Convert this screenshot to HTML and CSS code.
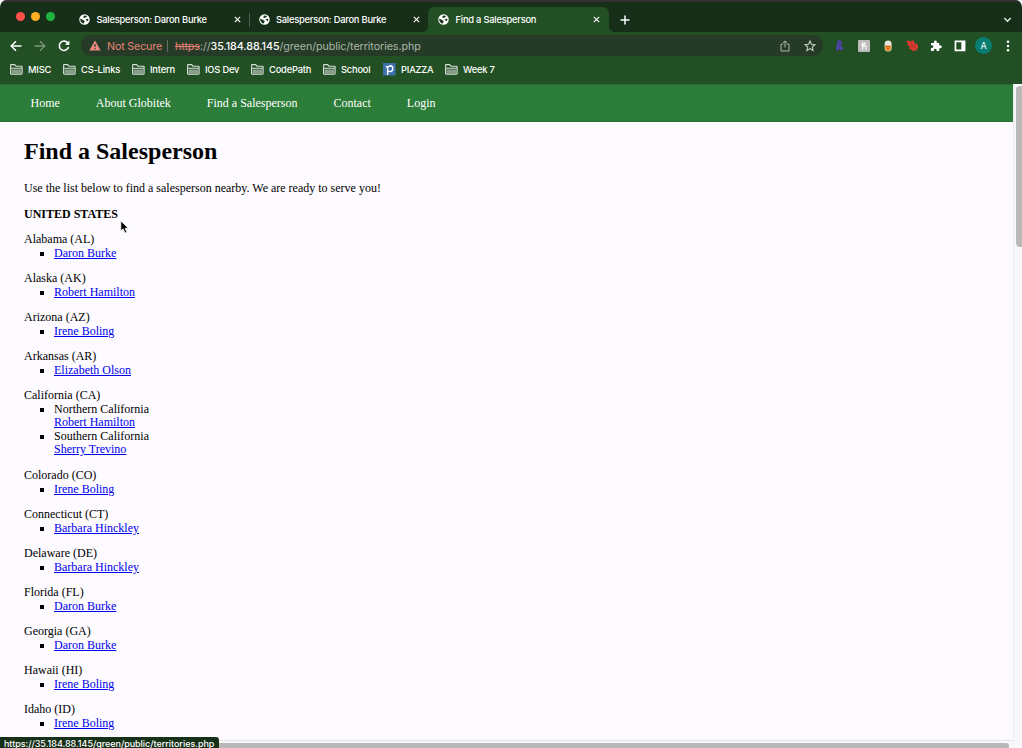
FILE: index.html
```html
<!DOCTYPE html>
<html lang="en">
<head>
<meta charset="utf-8">
<title>Find a Salesperson</title>
<link rel="stylesheet" href="styles.css">
</head>
<body>
<svg class="defs" width="0" height="0">
  <symbol id="globe" viewBox="0 0 12 12"><circle cx="6" cy="6" r="5.7" fill="#fff"/><path d="M1.4 4.8 3.5 5.9 4.8 6.6 6.3 8 5.2 10.3 3.5 10 1.5 7.5ZM5.8 1.6 9 2.2 8 3.2 6.9 4.2 5.2 4.4 4.6 3.2ZM7.1 5.6 9.1 5.3 10.4 6 9.6 7.9 8.3 7.2Z" fill="#1c3a1d"/></symbol>
  <symbol id="close" viewBox="0 0 7 7"><path d="M.8.8 6.2 6.2M6.2.8.8 6.2" stroke="#fff" stroke-width="1.1"/></symbol>
  <symbol id="folder" viewBox="0 0 13 11"><path d="M.6 9.5V1.2Q.6.6 1.2.6H4.6L6 2.2H11.5Q12.1 2.2 12.1 2.8V9.5Q12.1 10.1 11.5 10.1H1.2Q.6 10.1.6 9.5ZM.6 4.3H12.1" fill="none" stroke="#d7dfd7" stroke-width="1.1"/><path d="M1.5 5.5H11.4V9.4H1.5Z" fill="#8a9f8b"/></symbol>
</svg>
<div class="window">
  <div class="tabstrip">
    <div class="lights"><i class="red"></i><i class="yellow"></i><i class="green"></i></div>
    <div class="tab first"><svg class="globe"><use href="#globe"/></svg><span>Salesperson: Daron Burke</span><svg class="close"><use href="#close"/></svg></div>
    <div class="tab"><svg class="globe"><use href="#globe"/></svg><span>Salesperson: Daron Burke</span><svg class="close"><use href="#close"/></svg></div>
    <div class="tab active"><svg class="globe"><use href="#globe"/></svg><span>Find a Salesperson</span><svg class="close"><use href="#close"/></svg></div>
    <svg class="plus" viewBox="0 0 10 10"><path d="M5 .5V9.5M.5 5H9.5" stroke="#fff" stroke-width="1.5"/></svg>
    <svg class="chevron" viewBox="0 0 8 6"><path d="M.8 1 4 4.3 7.2 1" fill="none" stroke="#e6efe6" stroke-width="1.4"/></svg>
  </div>
  <div class="toolbar">
    <div class="history">
      <svg viewBox="0 0 12 12"><path d="M11.5 6H1.5M6 1.2 1.2 6 6 10.8" fill="none" stroke="#fff" stroke-width="1.5"/></svg>
      <svg viewBox="0 0 12 12"><path d="M.5 6H10.5M6 1.2 10.8 6 6 10.8" fill="none" stroke="#7b967c" stroke-width="1.3"/></svg>
      <svg viewBox="0 0 12 12"><path d="M10 3.2A4.7 4.7 0 1 0 10.6 7" fill="none" stroke="#fff" stroke-width="1.6"/><path d="M11.4.6V5H7Z" fill="#fff"/></svg>
    </div>
    <div class="address">
      <svg class="warn" viewBox="0 0 12 11"><path d="M6 .4 11.7 10.6H.3Z" fill="#ec8a80"/><path d="M6 4V7M6 8V9.2" stroke="#263b27" stroke-width="1.2"/></svg>
      <span class="notsecure">Not Secure</span><span class="bar"></span>
      <span class="url"><s>https</s>://<b>35.184.88.145</b>/green/public/territories.php</span>
      <svg class="share" viewBox="0 0 10 12"><path d="M3.2 4.2H1V11H9V4.2H6.8M5 7.5V1M2.9 3 5 .9 7.1 3" fill="none" stroke="#a9b9a9"/></svg>
      <svg class="star" viewBox="0 0 12 12"><path d="M6 1 7.4 4.3 11 4.6 8.3 7 9.1 10.5 6 8.6 2.9 10.5 3.7 7 1 4.6 4.6 4.3Z" fill="none" stroke="#c3cfc3" stroke-width="1.1"/></svg>
    </div>
    <div class="extensions">
      <svg viewBox="0 0 12 12"><path d="M3.4.5H6.6L7.6 2V5.2L6.4 6 8.8 8V10H6.8L5.5 8.6 4 10.2H1.8L3 7.6 2.2 5.4 3.4 4Z" fill="#5146b5"/><path d="M1.4 11.3H3.4M7.4 10.4H9.4M4.6 3H6.4M4.4 6H6.2" stroke="#37335f"/></svg>
      <svg viewBox="0 0 12 12"><rect width="12" height="12" rx="1" fill="#bcbcbc"/><path d="M4.6 2V9.8M4.6 6.4Q8 4.6 8 7V9.8M3.2 4.6Q7 4.8 7.4 2.3" fill="none" stroke="#fff" stroke-width="1.1"/></svg>
      <svg viewBox="0 0 12 12"><rect x="2.6" y=".5" width="7" height="11" rx="3.5" fill="#e8e5df"/><path d="M3 5.6H9.2V8.2Q8.8 11 6.1 11 3.4 11 3 8.2Z" fill="#e8952f"/><path d="M4 5.8 5.5 7.2 6.3 6.3 7.8 7.5M5 9H7.2" stroke="#bd4b22" fill="none"/></svg>
      <svg viewBox="0 0 12 12"><path d="M0 1 3.2.6 5 2.3 5.6.6 8 .6 8.2 3 10.4 3.4 12 5.4V8L10 10.5 7 11 5.1 9.5 3 8.6 3.6 6.2 1.4 5.4 2 3.5Z" fill="#d83a31"/><path d="M5 4 6.6 5 5.7 7M9 5 8 7.8" fill="none" stroke="#87302a" stroke-width=".8"/></svg>
      <svg viewBox="0 0 12 12"><path d="M1 3H4Q3.5.4 5.4.4 7.3.4 6.8 3H9.2V5.3Q11.8 4.8 11.8 6.8 11.8 8.7 9.2 8.2V11H6.7Q7 8.7 5.2 8.7 3.6 8.7 3.7 11H1V8Q3.4 8.2 3.4 6.5 3.4 4.9 1 5.3Z" fill="#fff"/></svg>
      <svg viewBox="0 0 12 12"><path d="M.6.5H11.4V11.3H.6Z" fill="#fff"/><path d="M2.3 2.3H7.3V9.6H2.3Z" fill="#225024"/></svg>
    </div>
    <div class="avatar">A</div>
    <svg class="dots" viewBox="0 0 4 12"><circle cx="2" cy="1.7" r="1.25" fill="#fff"/><circle cx="2" cy="6" r="1.25" fill="#fff"/><circle cx="2" cy="10.3" r="1.25" fill="#fff"/></svg>
  </div>
  <div class="bookmarks">
    <div style="width:53px"><svg><use href="#folder"/></svg>MISC</div>
    <div style="width:69px"><svg><use href="#folder"/></svg>CS-Links</div>
    <div style="width:55px"><svg><use href="#folder"/></svg>Intern</div>
    <div style="width:64px"><svg><use href="#folder"/></svg>IOS Dev</div>
    <div style="width:72px"><svg><use href="#folder"/></svg>CodePath</div>
    <div style="width:60px"><svg><use href="#folder"/></svg>School</div>
    <div style="width:62px"><svg viewBox="0 0 13 13" class="piazza"><rect width="12.5" height="12.5" fill="#3e70ad"/><path d="M2.6 3.6H4.6V12M4.6 5Q5.2 2.8 7.4 2.8 9.8 2.9 9.8 5.6 9.7 8.5 7.2 8.6 5.4 8.6 4.7 7.4" fill="none" stroke="#fff" stroke-width="1.4"/></svg>PIAZZA</div>
    <div><svg><use href="#folder"/></svg>Week 7</div>
  </div>
  <div class="viewport">
    <div class="page">
      <nav><a>Home</a><a>About Globitek</a><a>Find a Salesperson</a><a>Contact</a><a>Login</a></nav>
      <main>
        <h1>Find a Salesperson</h1>
        <p>Use the list below to find a salesperson nearby. We are ready to serve you!</p>
        <p><strong>UNITED STATES</strong></p>
        <section>Alabama (AL)<ul><li><a>Daron Burke</a></li></ul></section>
        <section>Alaska (AK)<ul><li><a>Robert Hamilton</a></li></ul></section>
        <section>Arizona (AZ)<ul><li><a>Irene Boling</a></li></ul></section>
        <section>Arkansas (AR)<ul><li><a>Elizabeth Olson</a></li></ul></section>
        <section>California (CA)<ul><li>Northern California<br><a>Robert Hamilton</a></li><li>Southern California<br><a>Sherry Trevino</a></li></ul></section>
        <section>Colorado (CO)<ul><li><a>Irene Boling</a></li></ul></section>
        <section>Connecticut (CT)<ul><li><a>Barbara Hinckley</a></li></ul></section>
        <section>Delaware (DE)<ul><li><a>Barbara Hinckley</a></li></ul></section>
        <section>Florida (FL)<ul><li><a>Daron Burke</a></li></ul></section>
        <section>Georgia (GA)<ul><li><a>Daron Burke</a></li></ul></section>
        <section>Hawaii (HI)<ul><li><a>Irene Boling</a></li></ul></section>
        <section>Idaho (ID)<ul><li><a>Irene Boling</a></li></ul></section>
      </main>
    </div>
    <div class="vscroll"><i></i></div>
    <div class="hscroll"><i></i></div>
  </div>
  <div class="status">https://35.184.88.145/green/public/territories.php</div>
  <svg class="cursor" viewBox="0 0 9 14"><path d="M.8.8V11L3.2 8.9 5 13 6.9 12.2 5.1 8.3H8.3Z" fill="#000" stroke="#fff" stroke-width=".8"/></svg>
</div>
</body>
</html>
```
FILE: styles.css
```css
* { box-sizing: border-box; }
body { margin: 0; background: #fdfbff; overflow: hidden; }
svg { display: block; flex: none; }
.defs { position: absolute; }
.window { position: relative; height: 748px; display: flex; flex-direction: column; background: #172e18; border-radius: 7px 7px 0 0; font-family: Inter, "Open Sans", sans-serif; color: #fff; overflow: hidden; }
.tabstrip { height: 32px; display: flex; border-top: 2px solid #343034; flex: none; }
.lights { width: 69px; padding: 10px 0 0 16px; display: flex; gap: 6px; flex: none; }
.lights i { width: 9px; height: 9px; border-radius: 50%; }
.red { background: #ff5149; }
.yellow { background: #fdb023; }
.green { background: #1fb440; }
.tab { position: relative; width: 179.5px; height: 25px; margin-top: 5px; padding: 0 8px 0 10px; display: flex; align-items: center; font-size: 9.3px; font-weight: 500; letter-spacing: -.21px; white-space: nowrap; }
.tab span { margin-left: 6.5px; flex: 1; }
.tab.first::after { content: ""; position: absolute; right: -1px; top: 6px; width: 1px; height: 14px; background: #4b5f4c; }
.tab.active { width: 181px; padding-right: 9px; background: #225024; border-radius: 6px 6px 0 0; }
.tab.active::before, .tab.active::after { content: ""; position: absolute; bottom: 0; width: 5px; height: 5px; }
.tab.active::before { left: -5px; background: radial-gradient(circle at 0 0, transparent 4.5px, #225024 5px); }
.tab.active::after { right: -5px; background: radial-gradient(circle at 100% 0, transparent 4.5px, #225024 5px); }
.globe { width: 11px; height: 11px; }
.close { width: 7px; height: 7px; }
.plus { width: 10px; height: 10px; margin: 13px 0 0 11px; }
.chevron { width: 9px; height: 6px; margin: 15px 10px 0 auto; }
.toolbar { height: 27px; flex: none; display: flex; align-items: center; background: #225024; padding-right: 12px; }
.history { width: 81px; display: flex; gap: 12px; padding-left: 10px; flex: none; }
.history svg { width: 12px; height: 12px; }
.address { width: 742px; height: 21px; border-radius: 11px; background: #263b27; display: flex; align-items: center; padding: 0 7px 0 8px; font-size: 11px; white-space: nowrap; flex: none; }
.warn { width: 12px; height: 11px; }
.notsecure { margin-left: 6px; width: 60px; padding-top: 1.5px; color: #e98178; font-size: 10.7px; letter-spacing: -.15px; }
.bar { width: 1px; height: 12px; background: #647265; margin-right: 7px; }
.url { flex: 1; padding-top: 1.5px; color: #a9b6a9; font-size: 10.7px; letter-spacing: -.06px; }
.url s { color: #e98178; }
.url b { color: #fff; font-weight: 500; }
.share { width: 10px; height: 12px; margin-right: 14px; }
.star { width: 12px; height: 12px; }
.extensions { display: flex; gap: 12px; margin-left: 11px; }
.extensions svg { width: 12px; height: 12px; }
.avatar { width: 17px; height: 17px; border-radius: 50%; background: #087d70; margin-left: 9px; text-align: center; font-size: 9px; line-height: 17px; }
.dots { width: 4px; height: 12px; margin-left: auto; }
.bookmarks { height: 24.5px; flex: none; display: flex; background: #225024; padding: 0 0 3px 10px; font-size: 9.3px; font-weight: 500; letter-spacing: -.18px; white-space: nowrap; }
.bookmarks div { display: flex; align-items: center; flex: none; }
.bookmarks svg { width: 13px; height: 11px; margin-right: 5px; }
.bookmarks .piazza { height: 13px; }
.viewport { flex: 1; min-height: 0; display: grid; grid-template: 1fr 7px / 1014px 8px; background: #f8f7f9; }
.page { background: #fdfbff; color: #000; font: 12px/13.5px "Liberation Serif", "Times New Roman", serif; overflow: hidden; border-right: 1px solid #ebe9ed; border-bottom: 1px solid #e4e3e6; }
nav { height: 38.5px; background: #2c7d39; display: flex; gap: 36px; padding: 2px 0 0 30.5px; align-items: center; color: #fff; border-top: 1px solid #2a6c33; border-bottom: 1px solid #277536; }
main { padding-left: 24px; }
h1 { margin: 16px 0 0; font-size: 24px; line-height: 27px; }
p { margin: 12px 0; }
h1 + p { margin-top: 17.3px; }
section { margin-bottom: 12px; }
section:nth-of-type(n+6) { margin-bottom: 11.5px; }
section:nth-of-type(n+6) ul { margin-top: .5px; }
ul { margin: 0; padding-left: 30px; list-style: square; }
main a { color: #0000ee; text-decoration: underline; }
.vscroll { padding: 2px 0 0 2px; }
.vscroll i { display: block; height: 161px; width: 8px; border-radius: 4px; background: #b8b8b8; }
.hscroll { padding-top: 2px; }
.hscroll i { display: block; height: 5px; width: 1009px; border-radius: 3px 3px 0 0; background: #b8b8b8; }
.status { position: absolute; left: 0; bottom: 0; width: 219px; height: 11px; background: #173018; border-radius: 0 3px 0 0; padding-left: 4px; font-size: 9px; line-height: 14px; white-space: nowrap; font-weight: 500; letter-spacing: -.04px; }
.cursor { position: absolute; left: 120px; top: 220px; width: 9px; height: 14px; }
```
